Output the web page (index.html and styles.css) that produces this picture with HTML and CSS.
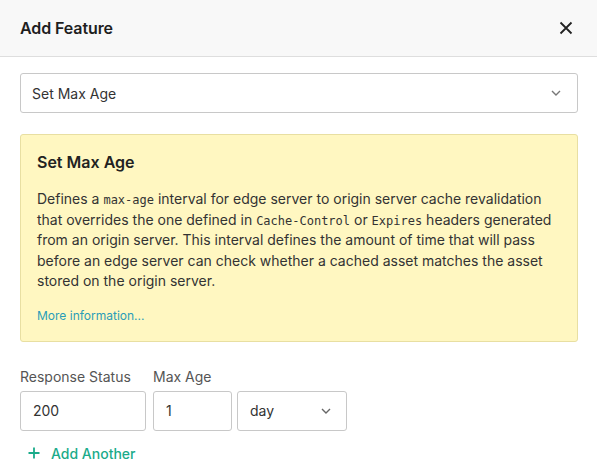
FILE: index.html
```html
<!DOCTYPE html>
<html>
<head>
<meta charset="utf-8">
<link rel="stylesheet" href="styles.css">
</head>
<body>
<div class="modal">
  <header class="modal-header">
    <h1 class="modal-title">Add Feature</h1>
    <button class="close-btn" aria-label="Close">
      <svg width="14" height="14" viewBox="0 0 14 14"><path d="M1.5 1.5L12.5 12.5M12.5 1.5L1.5 12.5" stroke="#222" stroke-width="1.8" fill="none"/></svg>
    </button>
  </header>
  <div class="modal-body">
    <div class="select select-wide">
      <span>Set Max Age</span>
      <svg class="chev" width="10" height="6" viewBox="0 0 10 6"><path d="M1 1L5 5L9 1" stroke="#777" stroke-width="1.4" fill="none"/></svg>
    </div>
    <div class="info">
      <h2 class="info-title">Set Max Age</h2>
      <p class="info-text">Defines a <code>max-age</code> interval for edge server to origin server cache revalidation that overrides the one defined in <code>Cache-Control</code> or <code>Expires</code> headers generated from an origin server. This interval defines the amount of time that will pass before an edge server can check whether a cached asset matches the asset stored on the origin server.</p>
      <a class="info-link" href="#">More information...</a>
    </div>
    <div class="fields">
      <div class="field">
        <label class="label">Response Status</label>
        <div class="input input-status">200</div>
      </div>
      <div class="field">
        <label class="label">Max Age</label>
        <div class="row">
          <div class="input input-age">1</div>
          <div class="select select-unit">
            <span>day</span>
            <svg class="chev" width="10" height="6" viewBox="0 0 10 6"><path d="M1 1L5 5L9 1" stroke="#666" stroke-width="1.4" fill="none"/></svg>
          </div>
        </div>
      </div>
    </div>
    <a class="add-another" href="#">
      <svg width="12" height="12" viewBox="0 0 12 12"><path d="M6 0.5V11.5M0.5 6H11.5" stroke="#1aab8a" stroke-width="1.8" fill="none"/></svg>
      <span>Add Another</span>
    </a>
  </div>
</div>
</body>
</html>
```
FILE: styles.css
```css
* { box-sizing: border-box; }
html, body { margin: 0; padding: 0; background: #fff; }
body { font-family: Inter, "Noto Sans", sans-serif; color: #222; width: 597px; height: 476px; overflow: hidden; }
.modal-header {
  height: 57px;
  background: #f8f8f8;
  border-bottom: 1px solid #dedede;
  display: flex;
  align-items: center;
  justify-content: space-between;
  padding: 0 24px 0 20px;
}
.modal-title { margin: 0; font-size: 16px; font-weight: 600; color: #1e1e1e; letter-spacing: -0.1px; }
.close-btn { background: none; border: 0; padding: 0; display: flex; margin-top: -1px; }
.modal-body { padding: 16px 19px 0 20px; }
.select, .input {
  border: 1px solid #c8c8c8;
  border-radius: 3px;
  height: 40px;
  display: flex;
  align-items: center;
  font-size: 14px;
  color: #333;
  background: #fff;
}
.select { justify-content: space-between; }
.select-wide { padding: 0 16px 0 11px; }
.info {
  margin-top: 21px;
  background: #fff7c1;
  border: 1px solid #e8dfa2;
  border-radius: 3px;
  padding: 17px 16px 18px 16px;
}
.info-title { margin: 0; font-size: 16px; font-weight: 600; color: #222; }
.info-text { margin: 17px 0 0; font-size: 14px; line-height: 20.6px; color: #333; }
.info-text code { font-family: "DejaVu Sans Mono", monospace; font-size: 12px; line-height: 1; }
.info-link { display: block; margin-top: 16px; font-size: 12px; color: #2a9db8; text-decoration: none; }
.fields { display: flex; gap: 7px; margin-top: 26px; }
.field { display: flex; flex-direction: column; }
.label { font-size: 14px; color: #555; margin-bottom: 6px; line-height: 17px; }
.input { padding: 0 12px; }
.input-status { width: 126px; }
.row { display: flex; gap: 5px; }
.input-age { width: 79px; }
.select-unit { width: 110px; padding: 0 15px 0 12px; }
.add-another {
  display: inline-flex;
  align-items: center;
  gap: 11px;
  margin-top: 14px;
  margin-left: 8px;
  font-size: 14px;
  color: #1aab8a;
  text-decoration: none;
  font-weight: 500;
}
```
